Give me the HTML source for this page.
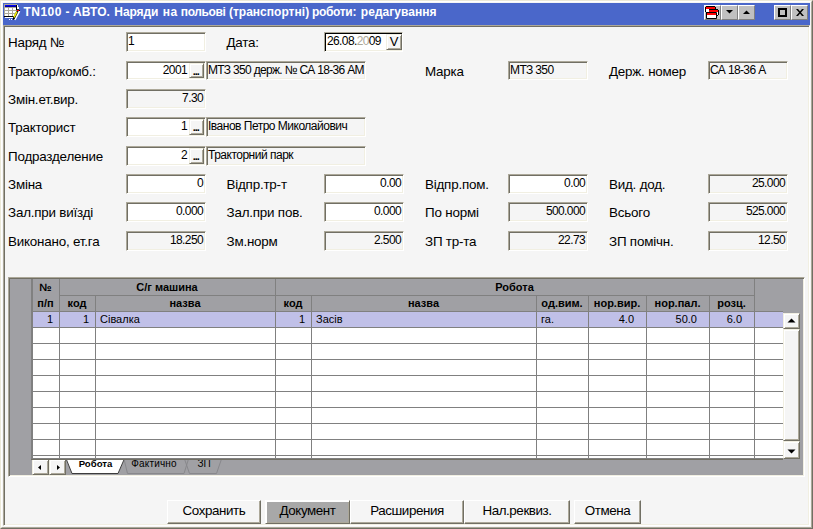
<!DOCTYPE html>
<html lang="uk"><head><meta charset="utf-8"><title>TN100 - АВТО. Наряди на польові (транспортні) роботи: редагування</title>
<style>
html,body{margin:0;padding:0}
body{width:813px;height:529px;position:relative;overflow:hidden;background:#f5f5f5;font-family:"Liberation Sans",sans-serif;color:#000}
*{box-sizing:border-box}
.a{position:absolute}
#win{left:0;top:0;width:813px;height:529px;border:1px solid;border-color:#ece9d8 #716f64 #716f64 #ece9d8}
#win2{left:1px;top:1px;width:811px;height:527px;border:1px solid;border-color:#fff #aca899 #aca899 #fff}
#title{left:3px;top:3px;width:807px;height:22px;background:#4a67ca;color:#fff;font-weight:bold;font-size:12px;line-height:22px;white-space:pre}
#title span{position:absolute;top:-2px}
#client{left:3px;top:25px;width:807px;height:501px;border:1px solid;border-color:#aca899 #fff #fff #aca899;box-shadow:inset 1px 1px 0 #716f64,inset -1px -1px 0 #f1efe2}
.cb{position:absolute;top:5px;width:17px;height:15px;background:#c0c0c0;border:1px solid;border-color:#fff #808080 #808080 #fff}
.cb svg{position:absolute;left:0;top:0}
.l{position:absolute;font-size:13.4px;line-height:19px;white-space:pre;color:#000;letter-spacing:-0.2px}
.f{position:absolute;height:20px;border:1px solid;border-color:#aca899 #fff #fff #aca899;box-shadow:inset 1px 1px 0 #716f64,inset -1px -1px 0 #f1efe2;background:#fff;font-size:12px;letter-spacing:-0.62px;line-height:17px;white-space:pre;padding:0 2px 0 1px;overflow:hidden}
.f.ro{background:#f5f5f5}
.f.r{text-align:right}
.f.dt{box-shadow:inset 1px 1px 0 #000,inset -1px -1px 0 #f1efe2;padding-left:2px}
.f.t1{letter-spacing:-0.68px}
.f.t2{letter-spacing:-0.5px}
.f.wb{padding-right:18px}
.b3{position:absolute;right:1px;top:1px;bottom:1px;width:15px;background:#f5f5f5;border:1px solid;border-color:#f1efe2 #716f64 #716f64 #f1efe2;box-shadow:inset 1px 1px 0 #fff,inset -1px -1px 0 #aca899;font-size:11px;font-weight:bold;line-height:14.4px;text-align:left;letter-spacing:-1.06px;padding:0 0 0 2.8px;color:#000}
.btn{position:absolute;top:500px;height:24px;background:#f5f5f5;border:1px solid;border-color:#fff #716f64 #716f64 #fff;box-shadow:inset -1px -1px 0 #aca899;font-size:13.4px;line-height:20px;text-align:center;white-space:pre;letter-spacing:-0.42px}
#grid{left:8px;top:277px;width:797px;height:200px;border:1px solid;border-color:#aca899 #fff #fff #aca899;box-shadow:inset 1px 1px 0 #716f64,inset -1px -1px 0 #f1efe2;background:#a0a0a4}
.h{position:absolute;font-size:11px;font-weight:bold;line-height:15px;text-align:center;white-space:pre}
.c{position:absolute;font-size:11px;line-height:15px;white-space:pre}
.vl{position:absolute;width:1px;background:#808080}
.hl{position:absolute;height:1px;background:#808080}
.sb{position:absolute;background:#f5f5f5;border:1px solid;border-color:#f1efe2 #716f64 #716f64 #f1efe2;box-shadow:inset 1px 1px 0 #fff,inset -1px -1px 0 #aca899}
</style></head><body>
<div id="win" class="a"></div><div id="win2" class="a"></div>
<div id="title" class="a"><svg class="a" style="left:0;top:0" width="18" height="18" viewBox="0 0 18 18" shape-rendering="crispEdges"><rect x="1" y="1" width="13" height="12" fill="#aca899"/><rect x="2" y="2" width="11" height="1" fill="#0000f0"/><rect x="2" y="3" width="11" height="1" fill="#0000a0"/><rect x="2" y="5" width="3" height="2" fill="#fff"/><rect x="6" y="5" width="3" height="2" fill="#fff"/><rect x="10" y="5" width="3" height="2" fill="#fff"/><rect x="2" y="8" width="3" height="2" fill="#fff"/><rect x="6" y="8" width="3" height="2" fill="#fff"/><rect x="10" y="8" width="3" height="2" fill="#fff"/><rect x="2" y="11" width="3" height="2" fill="#fff"/><rect x="6" y="11" width="3" height="2" fill="#fff"/><rect x="10" y="11" width="3" height="2" fill="#fff"/><rect x="1" y="13" width="10" height="1" fill="#000"/><rect x="2" y="14" width="8" height="1" fill="#fff"/><rect x="6" y="16" width="1" height="1" fill="#fff"/><rect x="8" y="16" width="1" height="1" fill="#fff"/><rect x="13" y="2" width="1" height="5" fill="#000"/><path d="M14 2H15V4H16V6H14Z" fill="#fff"/><g shape-rendering="auto"><path d="M16.6 8.2L11.8 16.8" stroke="#fff" stroke-width="1.6"/><path d="M13.6 7.6L9.9 15.2L10 17L11.6 16L15.3 8.6Z" fill="#000"/><path d="M13.9 8.6L11 14.4" stroke="#f4f000" stroke-width="1.5"/></g><rect x="14" y="6" width="2" height="1" fill="#333"/><rect x="14" y="7" width="2" height="1" fill="#f00"/><rect x="16" y="7" width="1" height="1" fill="#000"/></svg><span style="left:20.4px;letter-spacing:0.52px">TN100</span> <span style="left:62.4px;letter-spacing:0px">-</span> <span style="left:69.9px;letter-spacing:0.11px">АВТО.</span> <span style="left:111.3px;letter-spacing:-0.08px">Наряди</span> <span style="left:159.8px;letter-spacing:0.48px">на</span> <span style="left:177.8px;letter-spacing:-0.39px">польові</span> <span style="left:225.9px;letter-spacing:0.02px">(транспортні)</span> <span style="left:309.0px;letter-spacing:-0.33px">роботи:</span> <span style="left:357.8px;letter-spacing:0.04px">редагування</span></div>
<div class="cb" style="left:704px"><svg width="15" height="13" viewBox="0 0 15 13"><path d="M1 0H10V1H11V4H10V3H4V6H2V7H1V6H0V1H1Z" fill="#000"/><rect x="1" y="1" width="9" height="2" fill="#f00"/><rect x="1" y="3" width="3" height="3" fill="#fff"/><path d="M4 3H13V4H14V9H13V10H11V4H4Z" fill="#000"/><rect x="4" y="4" width="9" height="2" fill="#f00"/><rect x="11" y="6" width="2" height="3" fill="#fff"/><rect x="1" y="6" width="11" height="7" rx="1" fill="#000"/><rect x="2" y="7" width="9" height="2" fill="#f00"/><rect x="2" y="9" width="9" height="3" fill="#fff"/></svg></div>
<div class="cb" style="left:721px"><svg width="15" height="13" viewBox="0 0 15 13"><path d="M4 4H11L7.5 7.5Z" fill="#000"/></svg></div>
<div class="cb" style="left:738px"><svg width="15" height="13" viewBox="0 0 15 13"><path d="M4 8H11L7.5 4.5Z" fill="#000"/></svg></div>
<div class="cb" style="left:774px"><svg width="15" height="13" viewBox="0 0 15 13"><rect x="4" y="3" width="7" height="7" fill="none" stroke="#000" stroke-width="2"/></svg></div>
<div class="cb" style="left:791px"><svg width="15" height="13" viewBox="0 0 15 13"><path d="M4 3H6L12 10H10ZM10 3H12L6 10H4Z" fill="#000"/></svg></div>
<div id="client" class="a"></div>
<div class="l" style="left:8px;top:33px">Наряд №</div>
<div class="f " style="left:126px;top:32px;width:80px">1</div>
<div class="l" style="left:226.5px;top:33px">Дата:</div>
<div class="f dt" style="left:324px;top:32px;width:79px">26.08.<span style="color:#aca899">20</span>09<div class="b3" style="right:0;width:16px;font-size:13px;font-weight:normal;letter-spacing:0;line-height:14px;text-align:center;padding:0">V</div></div>
<div class="l" style="left:8px;top:62px">Трактор/комб.:</div>
<div class="f r wb" style="left:126px;top:61px;width:80px;height:19px">2001<div class="b3">...</div></div>
<div class="f ro t1" style="left:206px;top:61px;width:160px;height:19px">МТЗ 350 держ. № СА 18-36 АМ</div>
<div class="l" style="left:425px;top:62px">Марка</div>
<div class="f ro" style="left:508px;top:61px;width:80px;height:19px">МТЗ 350</div>
<div class="l" style="left:609px;top:62px">Держ. номер</div>
<div class="f ro" style="left:708px;top:61px;width:80px;height:19px">СА 18-36 А</div>
<div class="l" style="left:8px;top:90px">Змін.ет.вир.</div>
<div class="f r ro" style="left:126px;top:89px;width:80px">7.30</div>
<div class="l" style="left:8px;top:118px">Тракторист</div>
<div class="f r wb" style="left:126px;top:117px;width:80px">1<div class="b3">...</div></div>
<div class="f ro t2" style="left:206px;top:117px;width:160px">Іванов Петро Миколайович</div>
<div class="l" style="left:8px;top:147px">Подразделение</div>
<div class="f r wb" style="left:126px;top:146px;width:80px">2<div class="b3">...</div></div>
<div class="f ro t2" style="left:206px;top:146px;width:160px">Тракторний парк</div>
<div class="l" style="left:8px;top:175px">Зміна</div>
<div class="f r" style="left:126px;top:174px;width:80px">0</div>
<div class="l" style="left:226.5px;top:175px">Відпр.тр-т</div>
<div class="f r" style="left:324px;top:174px;width:80px">0.00</div>
<div class="l" style="left:425px;top:175px">Відпр.пом.</div>
<div class="f r" style="left:508px;top:174px;width:80px">0.00</div>
<div class="l" style="left:609px;top:175px">Вид. дод.</div>
<div class="f r ro" style="left:708px;top:174px;width:80px">25.000</div>
<div class="l" style="left:8px;top:203px">Зал.при виїзді</div>
<div class="f r" style="left:126px;top:202px;width:80px">0.000</div>
<div class="l" style="left:226.5px;top:203px">Зал.при пов.</div>
<div class="f r" style="left:324px;top:202px;width:80px">0.000</div>
<div class="l" style="left:425px;top:203px">По нормі</div>
<div class="f r ro" style="left:508px;top:202px;width:80px">500.000</div>
<div class="l" style="left:609px;top:203px">Всього</div>
<div class="f r ro" style="left:708px;top:202px;width:80px">525.000</div>
<div class="l" style="left:8px;top:232px">Виконано, ет.га</div>
<div class="f r ro" style="left:126px;top:231px;width:80px">18.250</div>
<div class="l" style="left:226.5px;top:232px">Зм.норм</div>
<div class="f r ro" style="left:324px;top:231px;width:80px">2.500</div>
<div class="l" style="left:425px;top:232px">ЗП тр-та</div>
<div class="f r ro" style="left:508px;top:231px;width:80px">22.73</div>
<div class="l" style="left:609px;top:232px">ЗП помічн.</div>
<div class="f r ro" style="left:708px;top:231px;width:80px">12.50</div>
<div id="grid" class="a">
<div class="a" style="left:24px;top:34px;width:750px;height:146px;background:#fff"></div>
<div class="a" style="left:24px;top:34px;width:750px;height:15px;background:#c0c0e8"></div>
<div class="hl" style="left:51px;top:17px;width:694px"></div>
<div class="hl" style="left:24px;top:33px;width:750px"></div>
<div class="hl" style="left:24px;top:49px;width:750px"></div>
<div class="hl" style="left:24px;top:65px;width:750px"></div>
<div class="hl" style="left:24px;top:81px;width:750px"></div>
<div class="hl" style="left:24px;top:97px;width:750px"></div>
<div class="hl" style="left:24px;top:113px;width:750px"></div>
<div class="hl" style="left:24px;top:129px;width:750px"></div>
<div class="hl" style="left:24px;top:145px;width:750px"></div>
<div class="hl" style="left:24px;top:161px;width:750px"></div>
<div class="hl" style="left:24px;top:177px;width:750px"></div>
<div class="hl" style="left:22px;top:180px;width:752px"></div>
<div class="vl" style="left:22px;top:1px;width:2px;height:180px"></div>
<div class="vl" style="left:50px;top:1px;height:179px"></div>
<div class="vl" style="left:86px;top:18px;height:162px"></div>
<div class="vl" style="left:266px;top:1px;height:179px"></div>
<div class="vl" style="left:302px;top:18px;height:162px"></div>
<div class="vl" style="left:527px;top:18px;height:162px"></div>
<div class="vl" style="left:579px;top:18px;height:162px"></div>
<div class="vl" style="left:637px;top:18px;height:162px"></div>
<div class="vl" style="left:700px;top:18px;height:162px"></div>
<div class="vl" style="left:745px;top:1px;height:179px"></div>
<div class="h" style="left:24px;top:2px;width:25px">№</div>
<div class="h" style="left:24px;top:18px;width:25px">п/п</div>
<div class="h" style="left:51px;top:2px;width:214px">С/г машина</div>
<div class="h" style="left:51px;top:18px;width:34px">код</div>
<div class="h" style="left:87px;top:18px;width:178px">назва</div>
<div class="h" style="left:267px;top:2px;width:477px">Робота</div>
<div class="h" style="left:267px;top:18px;width:34px">код</div>
<div class="h" style="left:303px;top:18px;width:223px">назва</div>
<div class="h" style="left:528px;top:18px;width:50px">од.вим.</div>
<div class="h" style="left:580px;top:18px;width:56px">нор.вир.</div>
<div class="h" style="left:638px;top:18px;width:61px">нор.пал.</div>
<div class="h" style="left:701px;top:18px;width:43px">розц.</div>
<div class="c" style="left:24px;top:34px;width:26px;padding-right:6px;text-align:right">1</div>
<div class="c" style="left:51px;top:34px;width:35px;padding-right:6px;text-align:right">1</div>
<div class="c" style="left:87px;top:34px;width:179px;padding-left:4px">Сівалка</div>
<div class="c" style="left:267px;top:34px;width:35px;padding-right:6px;text-align:right">1</div>
<div class="c" style="left:303px;top:34px;width:224px;padding-left:4px">Засів</div>
<div class="c" style="left:528px;top:34px;width:51px;padding-left:4px">га.</div>
<div class="c" style="left:580px;top:34px;width:57px;padding-right:12px;text-align:right">4.0</div>
<div class="c" style="left:638px;top:34px;width:62px;padding-right:12px;text-align:right">50.0</div>
<div class="c" style="left:701px;top:34px;width:44px;padding-right:12px;text-align:right">6.0</div>
<div class="sb" style="left:774px;top:35px;width:17px;height:16px"><svg class="a" style="left:0;top:0" width="15" height="14"><path d="M3.5 8.5H11.5L7.5 4.5Z" fill="#000"/></svg></div>
<div class="sb" style="left:774px;top:51px;width:17px;height:112px"></div>
<div class="sb" style="left:774px;top:163px;width:17px;height:18px"><svg class="a" style="left:0;top:0" width="15" height="16"><path d="M3.5 7.5H11.5L7.5 11.5Z" fill="#000"/></svg></div>
<div class="sb" style="left:23px;top:181px;width:17px;height:16px"><svg class="a" style="left:0;top:0" width="15" height="14"><path d="M8 5V10L5 7.5Z" fill="#000"/></svg></div>
<div class="sb" style="left:40px;top:181px;width:17px;height:16px"><svg class="a" style="left:0;top:0" width="15" height="14"><path d="M7 5V10L10 7.5Z" fill="#000"/></svg></div>
<svg class="a" style="left:55px;top:181px" width="170" height="16" viewBox="64 459 170 16"><path d="M66 459L72 473.5H118L124.5 459Z" fill="#fff"/><path d="M66 458.5L72 473.5H118L124.5 458.5" fill="none" stroke="#3c3c3c"/><path d="M124 459L127.5 473.5H184L188.5 459M184.5 459L189.5 473.5H216.5L221.5 459" fill="none" stroke="#88888c"/></svg>
<div class="h" style="left:63px;top:179px;width:47px;line-height:14px;font-size:9.6px">Робота</div>
<div class="c" style="left:119px;top:179px;width:52px;text-align:center;line-height:14px;font-size:10px;letter-spacing:0.2px">Фактично</div>
<div class="c" style="left:184px;top:179px;width:22px;text-align:center;line-height:14px;font-size:10px">ЗП</div>
<div class="hl" style="left:22px;top:181px;width:752px;background:#716f64"></div>
</div>
<div class="btn" style="left:167px;width:94px;">Сохранить</div>
<div class="btn" style="left:265px;width:85px;background:#a8a8a8;box-shadow:inset 1px 1px 0 #fff,inset -1px -1px 0 #aca899">Документ</div>
<div class="btn" style="left:350px;width:114px;">Расширения</div>
<div class="btn" style="left:464px;width:106px;">Нал.реквиз.</div>
<div class="btn" style="left:574px;width:67px;">Отмена</div>
</body></html>
